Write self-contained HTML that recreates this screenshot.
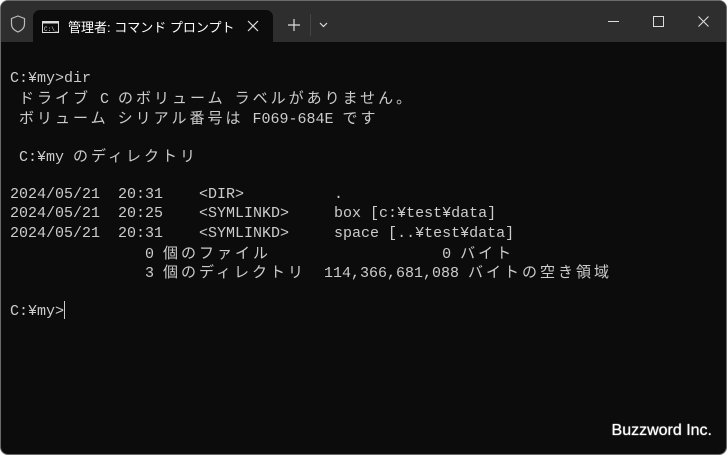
<!DOCTYPE html>
<html><head><meta charset="utf-8"><style>
html,body{margin:0;padding:0;background:#fff;width:728px;height:457px;overflow:hidden}
.win{position:absolute;left:0;top:0;width:727px;height:455px;background:#0c0c0c;border:1px solid #6a6a6a;border-radius:8px;overflow:hidden;box-sizing:border-box}
.tb{position:absolute;left:0;top:0;width:100%;height:41px;background:#2e2e2e}
.tab{position:absolute;left:32px;top:9px;width:240px;height:32px;background:#0c0c0c;border-radius:7px 7px 0 0}
.tt{position:absolute;left:35px;top:7px;color:#fff;font:13px "Liberation Sans","Noto Sans CJK JP",sans-serif}
.t{position:absolute;left:9px;top:68px;margin:0;color:#cccccc;font:15px "Liberation Mono",monospace}
.t div{height:19.35px;line-height:19.35px;white-space:pre;overflow:visible}
.j{font-family:"Noto Sans CJK JP",sans-serif;letter-spacing:3px;font-size:15px;line-height:19px}
.bz{position:absolute;right:14px;top:421px;color:#fff;font:16px "Liberation Sans",sans-serif;text-shadow:0 0 1px #fff}
.cur{display:inline-block;width:1px;height:18px;background:#ccc;vertical-align:-4px}
</style></head><body>
<div class="win">
<div class="tb">
<svg style="position:absolute;left:9px;top:14px" width="16" height="18" viewBox="0 0 16 18"><path d="M8 1 L14.5 3.5 V9 C14.5 13 11.5 15.5 8 17 C4.5 15.5 1.5 13 1.5 9 V3.5 Z" fill="none" stroke="#bbb" stroke-width="1.2"/></svg>
<div class="tab">
<svg style="position:absolute;left:9px;top:11px" width="17" height="12" viewBox="0 0 17 12"><rect x="0.5" y="0.5" width="16" height="11" fill="none" stroke="#ddd"/><rect x="0.5" y="0.5" width="16" height="2" fill="#ddd"/><text x="2" y="10" font-size="6" fill="#ddd" font-family="Liberation Mono">C:\_</text></svg>
<div class="tt">管理者: コマンド プロンプト</div>
<svg style="position:absolute;left:214px;top:10px" width="12" height="12"><path d="M1 1L11 11M11 1L1 11" stroke="#ddd" stroke-width="1.2"/></svg>
</div>
<svg style="position:absolute;left:287px;top:18px" width="12" height="12"><path d="M6 0V12M0 6H12" stroke="#ddd" stroke-width="1.2"/></svg>
<div style="position:absolute;left:309px;top:13px;width:1px;height:22px;background:#444"></div>
<svg style="position:absolute;left:318px;top:21px" width="9" height="6"><path d="M1 1L4.5 4.5L8 1" fill="none" stroke="#ddd" stroke-width="1.2"/></svg>
<div style="position:absolute;left:607px;top:20px;width:11px;height:1px;background:#ddd"></div>
<div style="position:absolute;left:652px;top:15px;width:9px;height:9px;border:1px solid #ddd"></div>
<svg style="position:absolute;left:697px;top:15px" width="11" height="11"><path d="M0.5 0.5L10.5 10.5M10.5 0.5L0.5 10.5" stroke="#ddd" stroke-width="1.1"/></svg>
</div>
<div class="t">
<div>C:¥my&gt;dir</div>
<div> <span class="j">ドライブ</span> C <span class="j">のボリューム</span> <span class="j">ラベルがありません。</span></div>
<div> <span class="j">ボリューム</span> <span class="j">シリアル番号は</span> F069-684E <span class="j">です</span></div>
<div> </div>
<div> C:¥my <span class="j">のディレクトリ</span></div>
<div> </div>
<div>2024/05/21  20:31    &lt;DIR&gt;          .</div>
<div>2024/05/21  20:25    &lt;SYMLINKD&gt;     box [c:¥test¥data]</div>
<div>2024/05/21  20:31    &lt;SYMLINKD&gt;     space [..¥test¥data]</div>
<div>               0 <span class="j">個のファイル</span>                   0 <span class="j">バイト</span></div>
<div>               3 <span class="j">個のディレクトリ</span>  114,366,681,088 <span class="j">バイトの空き領域</span></div>
<div> </div>
<div>C:¥my&gt;<span class="cur"></span></div>
</div>
<div class="bz">Buzzword Inc.</div>
</div>
</body></html>
